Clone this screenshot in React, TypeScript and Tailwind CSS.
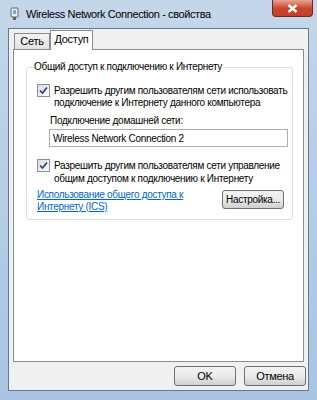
import React from "react";

function Check() {
  return (
    <span className="flex h-[13px] w-[13px] shrink-0 items-center justify-center border border-[#8e8f8f] bg-gradient-to-br from-[#dcdcdc] to-white">
      <svg width="9" height="9" viewBox="0 0 9 9">
        <path d="M1 4.5 L3.5 7 L8 1.5" fill="none" stroke="#1d3a8a" strokeWidth="1.6" />
      </svg>
    </span>
  );
}

function WinButton({ children, className = "" }: { children: React.ReactNode; className?: string }) {
  return (
    <div
      className={
        "flex items-center justify-center rounded-[3px] border border-[#707070] bg-gradient-to-b from-[#f2f2f2] via-[#ebebeb] to-[#cfcfcf] text-black " +
        className
      }
    >
      {children}
    </div>
  );
}

export default function App() {
  return (
    <div
      className="flex h-[400px] w-[317px] flex-col bg-gradient-to-b from-[#c4d7ea] via-[#b5cde6] to-[#a9c4e2] text-[10px] tracking-[-0.3px] text-black"
      style={{ fontFamily: '"Liberation Sans", Arial, sans-serif' }}
    >
      {/* title bar */}
      <div className="flex h-[28px] items-start">
        <div className="flex items-center gap-[7px] pl-[10px] pt-[6px]">
          <svg width="9" height="14" viewBox="0 0 9 14">
            <rect x="1" y="1" width="7" height="9" rx="1" fill="#e8eef5" stroke="#5a6470" />
            <rect x="3" y="10" width="3" height="3" fill="#5a6470" />
            <rect x="3" y="3" width="3" height="4" fill="#8aa2bd" />
          </svg>
          <span className="text-[11px] tracking-[-0.4px] text-black">Wireless Network Connection - свойства</span>
        </div>
        <div className="ml-auto mr-[4px] flex h-[17px] w-[41px] items-center justify-center rounded-b-[4px] border border-t-0 border-[#6b2a22] bg-gradient-to-b from-[#e8a493] via-[#c9472f] to-[#c0402a]">
          <svg width="11" height="9" viewBox="0 0 11 9">
            <path d="M1.5 1 L9.5 8 M9.5 1 L1.5 8" stroke="#fff" strokeWidth="2.4" />
          </svg>
        </div>
      </div>

      {/* client area */}
      <div className="mx-[8px] mb-[9px] flex flex-1 flex-col border border-[#5e7a99] bg-[#f0f0f0] px-[4px]">
        {/* tabs */}
        <div className="flex h-[20px] items-end pl-[1px]">
          <div className="flex h-[16px] w-[36px] items-center justify-center border border-b-0 border-[#898c95] bg-gradient-to-b from-[#f3f3f3] to-[#e2e2e2] text-[11px]">
            Сеть
          </div>
          <div className="-mb-px relative z-10 flex h-[20px] w-[43px] items-center justify-center border border-b-0 border-[#898c95] bg-white pb-[2px] text-[11px]">
            Доступ
          </div>
        </div>
        {/* tab page */}
        <div className="h-[313px] border border-[#898c95] bg-white pl-[12px] pr-[10px] pt-[17px]">
          <div className="relative h-[153px] rounded-[3px] border border-[#d5dfe5] pl-[10px] pr-[4px] pt-[16px]">
            <span className="absolute left-[6px] top-[-8px] whitespace-nowrap bg-white px-[1px] leading-[14px]">
              Общий доступ к подключению к Интернету
            </span>
            <div className="flex items-center gap-[4px] leading-[13px]">
              <Check />
              <span className="whitespace-nowrap">Разрешить другим пользователям сети использовать</span>
            </div>
            <div className="whitespace-nowrap pl-[17px] leading-[12px]">подключение к Интернету данного компьютера</div>
            <div className="mt-[5px] whitespace-nowrap pl-[13px] leading-[14px]">Подключение домашней сети:</div>
            <div className="ml-[12px] mt-[1px] flex h-[18px] items-center whitespace-nowrap border border-[#abadb3] px-[3px]">
              Wireless Network Connection 2
            </div>
            <div className="mt-[12px] flex items-center gap-[4px] leading-[13px]">
              <Check />
              <span className="whitespace-nowrap">Разрешить другим пользователям сети управление</span>
            </div>
            <div className="whitespace-nowrap pl-[17px] leading-[13px]">общим доступом к подключению к Интернету</div>
            <div className="mt-[4px] flex items-start justify-between">
              <span className="whitespace-nowrap leading-[12px] text-[#0066cc] underline">
                Использование общего доступа к
                <br />
                Интернету (ICS)
              </span>
              <WinButton className="mr-[4px] mt-[1px] h-[19px] w-[62px]">Настройка...</WinButton>
            </div>
          </div>
        </div>
        {/* buttons */}
        <div className="-mr-[2px] flex flex-1 items-center justify-end gap-[8px] text-[11px]">
          <WinButton className="h-[20px] w-[62px] border-[#3c7fb1] from-[#eaf6fd] via-[#d9f0fc] to-[#a7d9f5]">OK</WinButton>
          <WinButton className="h-[20px] w-[62px]">Отмена</WinButton>
        </div>
      </div>
    </div>
  );
}
